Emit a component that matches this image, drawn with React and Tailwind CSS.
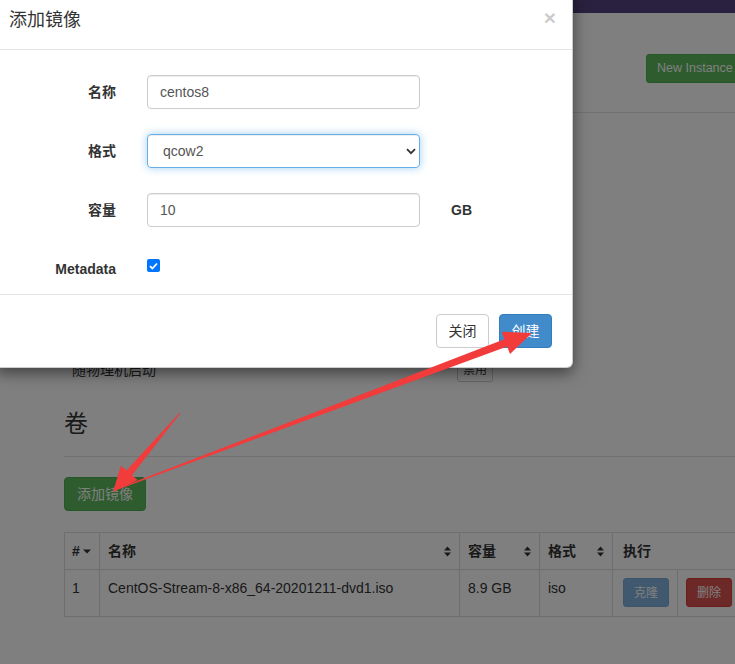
import React from "react";

function SortIcon() {
  return (
    <svg width="7" height="11" viewBox="0 0 7 11" className="shrink-0">
      <path d="M0 4.5 L3.5 0.5 L7 4.5 Z" fill="#333" />
      <path d="M0 6.5 L7 6.5 L3.5 10.5 Z" fill="#333" />
    </svg>
  );
}

function Caret() {
  return (
    <svg width="8" height="5" viewBox="0 0 8 5" className="shrink-0">
      <path d="M0 0.5 L8 0.5 L4 4.5 Z" fill="#333" />
    </svg>
  );
}

export default function App() {
  return (
    <div className="relative w-[735px] h-[664px] overflow-hidden bg-white font-['Liberation_Sans','Noto_Sans_CJK_SC',sans-serif] text-[14px] text-[#333]">
      {/* page */}
      <div className="h-[13px] bg-[#544280]" />
      <div className="w-[677px] ml-[64px]">
        <div className="h-[100px] border-b border-[#e5e5e5] flex items-start pt-[41px]">
          <div className="ml-[582px] h-[29px] px-[10px] flex items-center whitespace-nowrap rounded-[3px] bg-[#5cb85c] border border-[#4cae4c] text-[12.5px] text-white">
            New Instance
          </div>
        </div>
        <div className="mt-[245px] h-[24px] flex items-center">
          <div className="w-[393px] pl-[8px] leading-[24px]">随物理机启动</div>
          <div className="h-[23px] px-[5px] border border-[#ccc] bg-white rounded-[3px] text-[12px] leading-[21px]">禁用</div>
        </div>
        <h3 className="mt-[29px] pb-[19px] border-b border-[#e5e5e5] text-[24px] leading-[26px] font-normal">卷</h3>
        <div className="mt-[20px] h-[34px] w-[82px] flex items-center justify-center rounded-[4px] bg-[#5cb85c] border border-[#4cae4c] text-white">
          添加镜像
        </div>
        <table className="mt-[21px] w-[677px] border-collapse table-fixed">
          <colgroup>
            <col className="w-[35px]" />
            <col className="w-[360px]" />
            <col className="w-[80px]" />
            <col className="w-[73px]" />
            <col className="w-[65px]" />
            <col className="w-[64px]" />
          </colgroup>
          <thead>
            <tr className="h-[37px]">
              <th className="border border-[#ddd] px-[7px] text-left font-bold leading-[20px]">
                <div className="flex items-center gap-[3px]">#<Caret /></div>
              </th>
              <th className="border border-[#ddd] px-[8px] text-left font-bold leading-[20px]">
                <div className="flex items-center justify-between">名称<SortIcon /></div>
              </th>
              <th className="border border-[#ddd] px-[8px] text-left font-bold leading-[20px]">
                <div className="flex items-center justify-between">容量<SortIcon /></div>
              </th>
              <th className="border border-[#ddd] px-[8px] text-left font-bold leading-[20px]">
                <div className="flex items-center justify-between">格式<SortIcon /></div>
              </th>
              <th colSpan={2} className="border border-[#ddd] px-[10px] text-left font-bold leading-[20px]">执行</th>
            </tr>
          </thead>
          <tbody>
            <tr className="h-[47px]">
              <td className="border border-[#ddd] px-[7px] pt-[8px] align-top leading-[20px]">1</td>
              <td className="border border-[#ddd] px-[8px] pt-[8px] align-top leading-[20px] whitespace-nowrap">CentOS-Stream-8-x86_64-20201211-dvd1.iso</td>
              <td className="border border-[#ddd] px-[8px] pt-[8px] align-top leading-[20px]">8.9 GB</td>
              <td className="border border-[#ddd] px-[8px] pt-[8px] align-top leading-[20px]">iso</td>
              <td className="border border-[#ddd] pl-[10px] pt-[8px] align-top">
                <div className="w-[46px] h-[29px] flex items-center justify-center rounded-[3px] bg-[#428bca] border border-[#357ebd] opacity-65 text-[12px] text-white">克隆</div>
              </td>
              <td className="border border-[#ddd] pl-[8px] pt-[8px] align-top">
                <div className="w-[46px] h-[29px] flex items-center justify-center rounded-[3px] bg-[#d9534f] border border-[#d43f3a] text-[12px] text-white">删除</div>
              </td>
            </tr>
          </tbody>
        </table>
      </div>

      {/* backdrop */}
      <div className="absolute inset-0 bg-black/50" />

      {/* modal */}
      <div className="absolute left-[-5px] top-[-8px] w-[578px] bg-white rounded-[6px] border border-black/20 shadow-[0_5px_15px_rgba(0,0,0,0.5)] text-[#333]">
        <div className="h-[57px] pl-[13px] pr-[16px] pt-[14px] border-b border-[#e5e5e5] flex justify-between items-start">
          <div className="text-[18px] leading-[26px]">添加镜像</div>
          <div className="text-[21px] font-bold leading-[21px] text-black opacity-20">×</div>
        </div>
        <div className="px-[15px] pt-[25px] pb-[8px] flex flex-col gap-[25px]">
          <div className="flex items-center h-[34px]">
            <div className="w-[105px] text-right font-bold">名称</div>
            <div className="ml-[31px] w-[273px] h-[34px] border border-[#ccc] rounded-[4px] px-[12px] flex items-center text-[#555] shadow-[inset_0_1px_1px_rgba(0,0,0,0.075)]">centos8</div>
          </div>
          <div className="flex items-center h-[34px]">
            <div className="w-[105px] text-right font-bold">格式</div>
            <div className="ml-[31px] w-[273px] h-[34px] border border-[#66afe9] rounded-[4px] pl-[15px] pr-[3px] flex items-center justify-between text-[#555] shadow-[inset_0_1px_1px_rgba(0,0,0,0.075),0_0_8px_rgba(102,175,233,0.6)]">
              <span>qcow2</span>
              <svg width="10" height="7" viewBox="0 0 10 7">
                <path d="M1 1.2 L5 5.2 L9 1.2" fill="none" stroke="#333" strokeWidth="1.8" />
              </svg>
            </div>
          </div>
          <div className="flex items-center h-[34px]">
            <div className="w-[105px] text-right font-bold">容量</div>
            <div className="ml-[31px] w-[273px] h-[34px] border border-[#ccc] rounded-[4px] px-[12px] flex items-center text-[#555] shadow-[inset_0_1px_1px_rgba(0,0,0,0.075)]">10</div>
            <div className="ml-[31px] font-bold">GB</div>
          </div>
          <div className="flex items-start h-[34px]">
            <div className="w-[105px] text-right font-bold leading-[34px]">Metadata</div>
            <div className="ml-[31px] mt-[7px] w-[13px] h-[13px] rounded-[2px] bg-[#0075ff] flex items-center justify-center">
              <svg width="9" height="8" viewBox="0 0 9 8">
                <path d="M1 4.2 L3.4 6.5 L8 1.5" fill="none" stroke="white" strokeWidth="1.8" />
              </svg>
            </div>
          </div>
        </div>
        <div className="border-t border-[#e5e5e5] pt-[19px] pb-[19px] pr-[20px] flex justify-end gap-[10px]">
          <div className="w-[53px] h-[34px] flex items-center justify-center rounded-[4px] border border-[#ccc] bg-white text-[#333]">关闭</div>
          <div className="w-[53px] h-[34px] flex items-center justify-center rounded-[4px] border border-[#357ebd] bg-[#428bca] text-white">创建</div>
        </div>
      </div>

      {/* annotation arrows */}
      <svg className="absolute inset-0 pointer-events-none" width="735" height="664" viewBox="0 0 735 664">
        <polygon
          fill="#f23b3b"
          points="115.2,490.5 507.2,346.6 510,354.1 532,333 501.6,331.7 504.4,339.2 114.8,489.5"
        />
        <polygon
          fill="#f23b3b"
          points="180.4,413.3 131.9,475.2 137.6,480 113,492 120.8,465.8 126.5,470.6 179.6,412.7"
        />
      </svg>
    </div>
  );
}
